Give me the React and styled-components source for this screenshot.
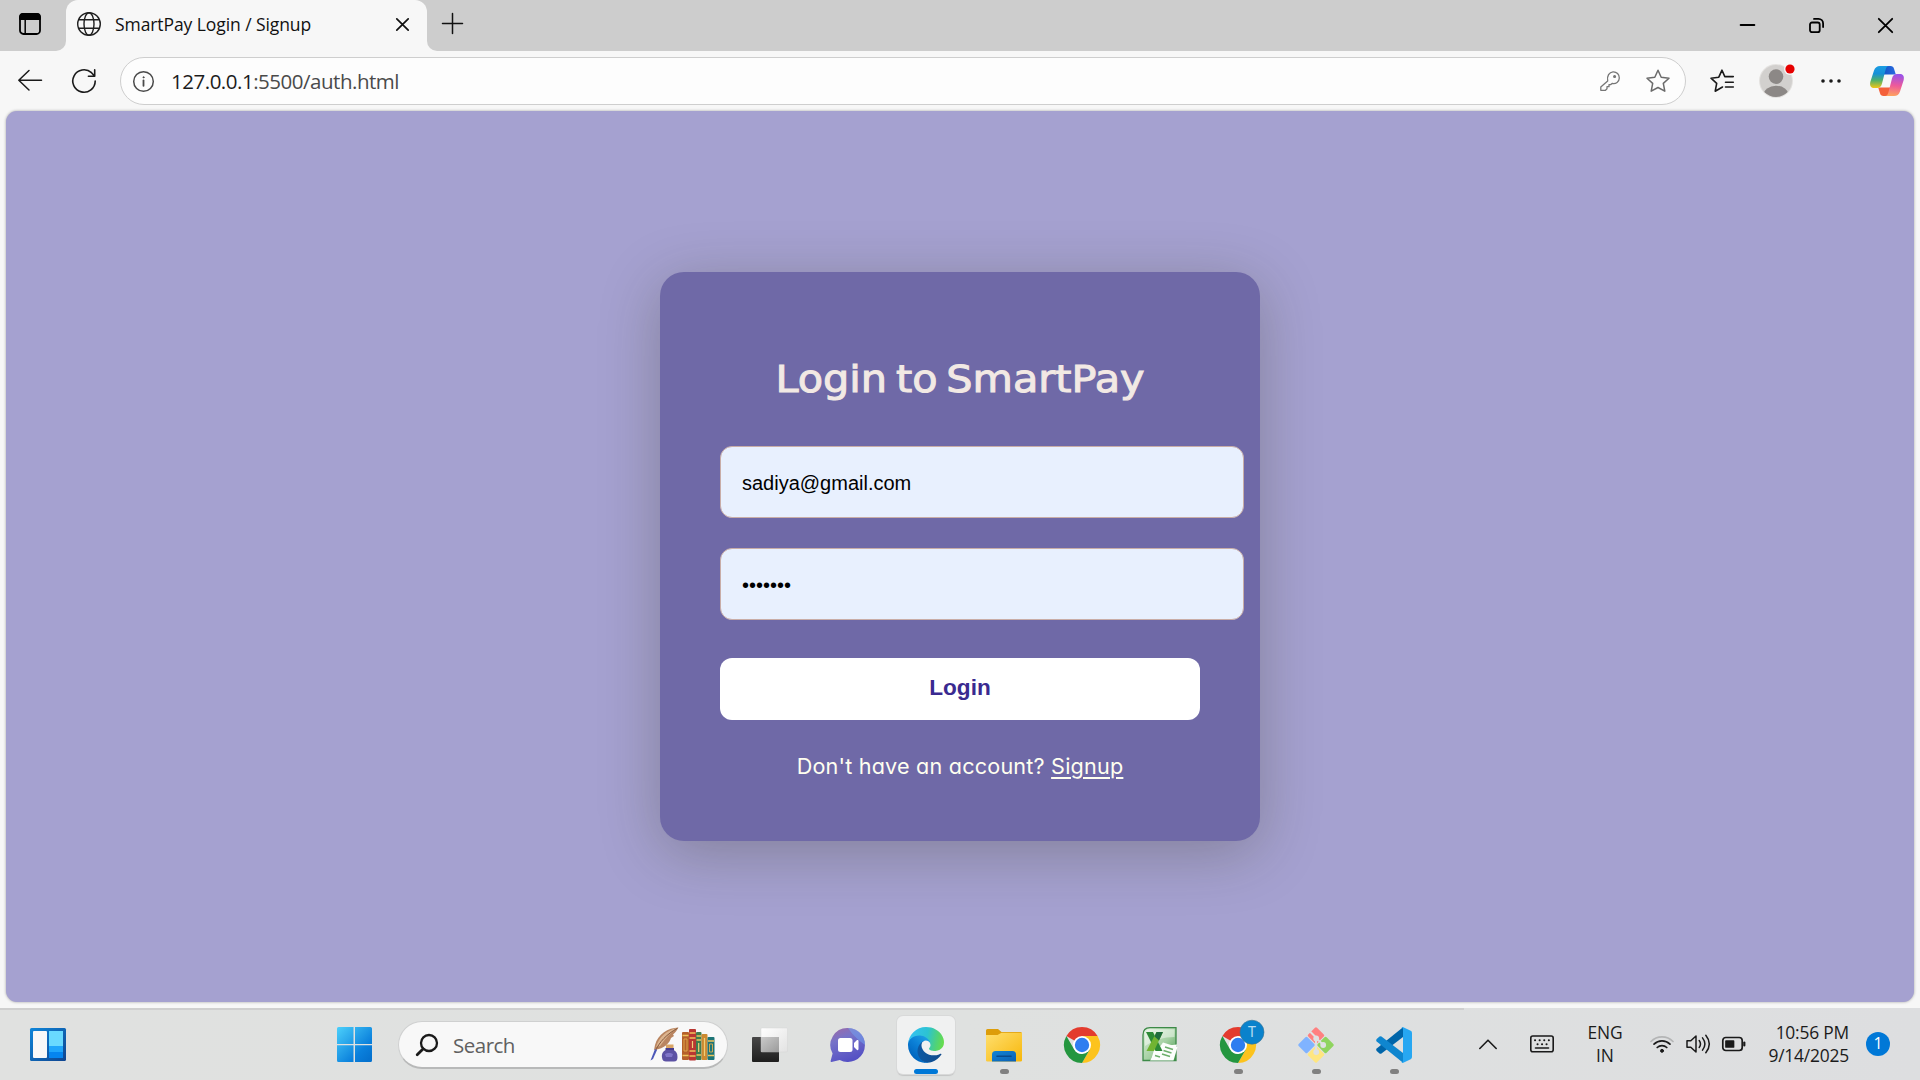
import React from "react";
import styled, { createGlobalStyle, css } from "styled-components";

const Global = createGlobalStyle`
  * { box-sizing: border-box; }
  html, body { margin: 0; padding: 0; overflow: hidden; }
  body { font-family: "Open Sans", "Noto Sans", sans-serif; background: #f7f7f7; }
  svg { display: block; flex: none; overflow: visible; }
`;

const Desktop = styled.div`
  width: 1920px;
  height: 1080px;
  display: flex;
  flex-direction: column;
  background: #f7f7f7;
`;

/* ---------- tab strip ---------- */
const TabStrip = styled.header`
  height: 51px;
  display: flex;
  flex: none;
`;
const StripStart = styled.div`
  width: 66px;
  padding: 13px 0 0 19px;
  background: #cdcdcd;
  border-bottom-right-radius: 10px;
`;
const TabHolder = styled.div`
  width: 361px;
  background: linear-gradient(#cdcdcd 50%, #f7f7f7 50%);
`;
const Tab = styled.div`
  height: 51px;
  display: flex;
  align-items: center;
  padding: 0 18px 4px 11px;
  border-radius: 12px 12px 0 0;
  background: #f7f7f7;
`;
const TabTitle = styled.span`
  flex: 1;
  margin-left: 14px;
  font-size: 17.5px;
  line-height: 24px;
  letter-spacing: -0.08px;
  color: #111;
  white-space: nowrap;
`;
const StripEnd = styled.div`
  flex: 1;
  display: flex;
  justify-content: space-between;
  padding: 13px 27px 0 15px;
  background: #cdcdcd;
  border-bottom-left-radius: 10px;
`;
const WindowButtons = styled.div`
  display: flex;
  gap: 54px;
  padding-top: 5px;
`;

/* ---------- toolbar ---------- */
const Toolbar = styled.div`
  height: 60px;
  flex: none;
  display: flex;
  align-items: center;
  padding: 0 16px 0 18px;
`;
const NavButtons = styled.div`
  display: flex;
  align-items: center;
  gap: 30px;
  width: 102px;
`;
const AddressBar = styled.div`
  width: 1566px;
  height: 48px;
  display: flex;
  align-items: center;
  padding: 0 15px 0 12px;
  border: 1px solid #cecece;
  border-radius: 24px;
  background: #fdfdfd;
`;
const Url = styled.span`
  flex: 1;
  margin-left: 17px;
  font-size: 20.5px;
  line-height: 28px;
  letter-spacing: -0.48px;
  color: #4a4a4a;
  white-space: nowrap;
  b { font-weight: 400; color: #1c1c1c; }
`;
const AddressIcons = styled.div`
  display: flex;
  align-items: center;
  gap: 26px;
`;
const ToolIcons = styled.div`
  flex: 1;
  display: flex;
  align-items: center;
  margin-left: 24px;
`;
const Gap = styled.i`
  width: ${(p) => p.$w}px;
  flex: none;
`;

/* ---------- page ---------- */
const Page = styled.main`
  width: 1908px;
  height: 891px;
  flex: none;
  margin: 0 6px;
  padding-top: 161px;
  display: flex;
  justify-content: center;
  align-items: flex-start;
  border-radius: 11px;
  background: #a5a1d0;
  box-shadow: 0 0 3px rgba(0, 0, 0, 0.35);
`;
const Card = styled.form`
  width: 600px;
  height: 569px;
  display: flex;
  flex-direction: column;
  padding: 82px 60px 0;
  border-radius: 24px;
  background: #6f69a7;
  box-shadow: 0 12px 60px rgba(40, 40, 10, 0.27);
`;
const Title = styled.h1`
  margin: 0 0 42px;
  height: 50px;
  display: flex;
  justify-content: center;
  font: 400 38px/50px "DejaVu Sans", sans-serif;
  -webkit-text-stroke: 1px #f2e9e4;
  word-spacing: -4px;
  transform: scaleX(1.09);
  color: #f2e9e4;
  white-space: nowrap;
`;
const Field = styled.input`
  width: 524px;
  height: 72px;
  flex: none;
  margin: 0 0 30px;
  padding: 2px 20px 0 21px;
  border: 1px solid #c9ada7;
  border-radius: 12px;
  outline: none;
  background: #e8f0fe;
  color: #000;
  font: 400 20px "Liberation Sans", sans-serif;
`;
const Submit = styled.button`
  width: 480px;
  height: 62px;
  flex: none;
  margin: 8px 0 0;
  padding: 0 0 2px;
  border: 0;
  border-radius: 12px;
  background: #fff;
  color: #3a2a90;
  font: 700 22.6px "Liberation Sans", sans-serif;
`;
const Switch = styled.p`
  margin: 30px 0 0;
  text-align: center;
  font: 400 21.6px/32px Inter, sans-serif;
  font-feature-settings: "cv11";
  letter-spacing: 0.2px;
  color: #fffff0;
  white-space: nowrap;
  u { text-decoration-thickness: 1.5px; text-underline-offset: 3px; text-decoration-skip-ink: auto; }
`;

/* ---------- taskbar ---------- */
const Spacer = styled.div`
  height: 6px;
  flex: none;
`;
const Taskbar = styled.footer`
  height: 72px;
  flex: none;
  display: flex;
  align-items: center;
  background: linear-gradient(90deg, #cfcfcf 0 1464px, transparent 1464px) 0 0 / 100% 2px no-repeat,
    linear-gradient(90deg, #e0e1e0, #dfe1e0 50%, #dddee0);
`;
const WidgetsArea = styled.div`
  width: 337px;
  flex: none;
  padding-left: 30px;
`;
const Search = styled.div`
  width: 330px;
  flex: none;
  height: 48px;
  margin: 2px 3px 0 26px;
  display: flex;
  align-items: center;
  padding: 0 12px 0 17px;
  border: 1px solid #cfd0d0;
  border-bottom: 2px solid #b8b9b9;
  border-radius: 24px;
  background: #f8f8f8;
`;
const SearchText = styled.span`
  flex: 1;
  margin-left: 15px;
  font-size: 20.5px;
  letter-spacing: -0.5px;
  line-height: 28px;
  color: #606060;
`;
const Slot = styled.div`
  width: 78px;
  flex: none;
  height: 72px;
  display: flex;
  flex-direction: column;
  align-items: center;
  padding-top: 8px;
`;
const Tile = styled.div`
  width: 58px;
  height: 58px;
  display: flex;
  flex-direction: column;
  align-items: center;
  justify-content: space-between;
  padding-top: 11px;
  border-radius: 6px;
  ${(p) =>
    p.$active &&
    css`
      background: #f0f1f1;
      box-shadow: 0 0 0 1px #d8d9d9, 0 2px 1px #c4c5c5;
    `}
`;
const Running = styled.i`
  width: ${(p) => (p.$active ? 24 : 9)}px;
  height: 5px;
  border-radius: 3px;
  background: ${(p) => (p.$active ? "#0078d7" : "#808080")};
  visibility: ${(p) => (p.$on ? "visible" : "hidden")};
`;
const Tray = styled.div`
  flex: 1;
  display: flex;
  align-items: center;
  padding: 0 30px 0 46px;
`;
const TrayText = styled.div`
  width: ${(p) => p.$w}px;
  flex: none;
  text-align: ${(p) => p.$align};
  font-size: 17.4px;
  line-height: 23px;
  letter-spacing: ${(p) => p.$ls || 0}px;
  color: #1b1b1b;
  white-space: nowrap;
`;
const Count = styled.span`
  width: 24px;
  flex: none;
  height: 24px;
  border-radius: 50%;
  background: #0078d7;
  color: #fff;
  font-size: 16px;
  line-height: 23px;
  text-align: center;
`;

/* ---------- icons ---------- */
const Line = ({ w = 24, h = 24, sw = 1.6, c = "#1a1a1a", children }) => (
  <svg width={w} height={h} viewBox={`0 0 ${w} ${h}`} fill="none" stroke={c} strokeWidth={sw} strokeLinecap="round" strokeLinejoin="round">
    {children}
  </svg>
);
const STAR = "M12 1.2 15.2 8.2 23 9.2 17.3 14.4 18.8 22.2 12 18.5 5.2 22.2 6.7 14.4 1 9.2 8.8 8.2Z";

const TabActions = () => (
  <Line w={22} h={22} sw={1.8} c="#000">
    <rect x="1" y="1" width="20" height="20" rx="3.5" />
    <path d="M1 6V4a3 3 0 0 1 3-3h14a3 3 0 0 1 3 3v2Z" fill="#000" />
    <path d="M6.2 6v15" strokeWidth="1.5" />
  </Line>
);
const Globe = () => (
  <Line sw={1.4} c="#1f1f1f">
    <circle cx="12" cy="12" r="11.3" />
    <ellipse cx="12" cy="12" rx="5" ry="11.3" />
    <path d="M1.8 7.7h20.4M1.8 16.3h20.4" />
  </Line>
);
const Info = () => (
  <Line w={21} h={21} sw={1.5} c="#4a4a4a">
    <circle cx="10.5" cy="10.5" r="9.8" />
    <path d="M10.5 9.5v5.3" strokeWidth="1.8" />
    <circle cx="10.5" cy="6.3" r="0.6" fill="#4a4a4a" strokeWidth="0.8" />
  </Line>
);
const Key = () => (
  <Line w={20} h={20} sw={1.3} c="#767676">
    <path d="M7.7 9.9C6.7 5.2 9.2 1 13 .8c3.700-.2 6.400 2.700 6.300 6.200-.1 3.900-3.400 6.200-7.200 5.400L10.800 13.600H9v2.100H7v2.100L5.500 19.300H.8v-3.200Z" />
    <circle cx="14.600" cy="5.500" r="0.900" fill="#767676" />
  </Line>
);
const Avatar = () => (
  <svg width="34" height="34" viewBox="0 0 34 34">
    <clipPath id="av"><circle cx="17" cy="17" r="16" /></clipPath>
    <circle cx="17" cy="17" r="17" fill="#e4e2e0" />
    <circle cx="17" cy="17" r="16" fill="#d2d0ce" />
    <circle cx="17" cy="12.600" r="7.300" fill="#8c8886" />
    <ellipse cx="17" cy="31" rx="12.500" ry="9.300" fill="#8c8886" clipPath="url(#av)" />
    <circle cx="31" cy="5" r="6" fill="#f7f7f7" />
    <circle cx="31" cy="5" r="4.600" fill="#e60000" />
  </svg>
);
const Copilot = () => (
  <svg width="34" height="30" viewBox="0 0 34 30">
    <defs>
      <linearGradient id="cpA" x1="0" y1="0" x2="0" y2="1">
        <stop offset="0" stopColor="#1b9de2" /><stop offset=".35" stopColor="#1690d8" /><stop offset=".65" stopColor="#4fb06a" /><stop offset="1" stopColor="#f3c614" />
      </linearGradient>
      <linearGradient id="cpB" x1=".3" y1="0" x2=".2" y2="1">
        <stop offset="0" stopColor="#9a52e8" /><stop offset=".5" stopColor="#ee5a9a" /><stop offset="1" stopColor="#ffa65c" />
      </linearGradient>
      <linearGradient id="cpC"><stop offset="0" stopColor="#1558c8" /><stop offset="1" stopColor="#2a6ae0" /></linearGradient>
    </defs>
    <path d="M14 0h6.500c2 0 3 1 3.500 2.700L25.800 8.500H20.500L18 8.500H14Z" fill="url(#cpC)" />
    <path d="M20 30h-6.500c-2 0-3-1-3.500-2.700L8.200 21.500H20Z" fill="#f4603a" />
    <path d="M10 0h9c-2 0-2.800 1.500-3.500 4L12 17.500c-.8 2.800-2 4.500-5 4.500H4C.8 22-.5 19.500.3 16L4 4.500C5 1.500 7 0 10 0Z" fill="url(#cpA)" />
    <path d="M24 30h-9c2 0 2.800-1.500 3.500-4L22 12.500C22.800 9.700 24 8 27 8h3c3.200 0 4.500 2.500 3.700 6L30 25.500C29 28.500 27 30 24 30Z" fill="url(#cpB)" />
  </svg>
);
const Widgets = () => (
  <svg width="36" height="33" viewBox="0 0 36 33">
    <defs><linearGradient id="wg" x2="1" y2="1"><stop stopColor="#0f86da" /><stop offset="1" stopColor="#0f4590" /></linearGradient></defs>
    <rect width="36" height="33" rx="1.500" fill="url(#wg)" />
    <rect x="3" y="3" width="14" height="27" rx="1" fill="#f8f8f8" />
    <path d="M19 3h14v15H19z" fill="#69daff" /><path d="M19 18h14v6H19z" fill="#1fa6fb" /><path d="M19 24h14v6H19z" fill="#0585ef" />
  </svg>
);
const Windows = () => (
  <svg width="35" height="35" viewBox="0 0 35 35">
    <defs><linearGradient id="wi" gradientUnits="userSpaceOnUse" x1="0" y1="0" x2="32" y2="32"><stop stopColor="#4cd0fb" /><stop offset=".75" stopColor="#0a80dc" /><stop offset="1" stopColor="#0572cf" /></linearGradient></defs>
    <path d="M1.500 0H16.500V17H0V1.500A1.500 1.500 0 0 1 1.500 0ZM18 0H33.500A1.500 1.500 0 0 1 35 1.500V17H18ZM0 18.200H16.500V35H1.500A1.500 1.500 0 0 1 0 33.500ZM18 18.200H35V33.500A1.500 1.500 0 0 1 33.500 35H18Z" fill="url(#wi)" />
  </svg>
);
const QuillAndBooks = () => (
  <svg width="65" height="35" viewBox="0 0 65 35">
    <path d="M28.500.5C18 .8 8 7 5 18l-1 5C15 22 20 15 21 11l3-2-1-1.500C26 5 27 3 28.500.5Z" fill="#b98560" />
    <path d="M27 1C17 3 9 10 6 20l4-1C15 12 20 6 27 1Z" fill="#dcb48e" />
    <path d="M27.500 1.200C17 7 9 15 5 25" stroke="#85583c" fill="none" />
    <path d="m5 22 2 1-4 9-2.500 1.500Z" fill="#4b57b8" />
    <path d="M16 17.500h7.500v4H16z" fill="#d9a565" /><path d="M15.500 21h8.500v4h-8.500z" fill="#453c8d" />
    <path d="M16 23c-3 1-4.500 4-4 7.500.3 3 2 4 4 4h8c2.500 0 3.500-1.500 3.500-4.500 0-4-1.500-6-4-7Z" fill="#5c52a4" />
    <path d="M15 27c2-1.500 6-1.500 8 0l-1 3h-6Z" fill="#7f75c8" />
    <rect x="32" y="5" width="7" height="28" rx="1" fill="#b5602a" />
    <rect x="39" y="2" width="7" height="31.500" rx="1" fill="#b93632" />
    <rect x="46" y="5" width="5.500" height="28" rx="1" fill="#3e7c4f" />
    <rect x="51.500" y="7" width="6" height="26" rx="1" fill="#cc8a30" />
    <rect x="57.500" y="10" width="7" height="23" rx="1" fill="#1d7475" />
    <path d="M32.500 8.500h6M32.500 28.500h6M39.500 6h6M39.500 11h6M39.500 24h6M39.500 29h6M46.500 9h4.500M46.500 13h4.500M46.500 28h4.500M58 14h6M58 28.500h6" stroke="#efc45c" strokeWidth="1.300" />
    <path d="M34 12h3v12h-3zM59.500 17h3v8h-3z" fill="none" stroke="#e2ad4c" strokeWidth=".9" />
    <path d="M42.500 14v7M48.700 16v9M54.500 11v18" stroke="#f0cf78" strokeWidth="1.200" />
  </svg>
);
const TaskView = () => (
  <svg width="36" height="36" viewBox="0 0 36 36">
    <defs>
      <linearGradient id="tvA" x2="0" y2="1"><stop stopColor="#474747" /><stop offset="1" stopColor="#1e1e1e" /></linearGradient>
      <linearGradient id="tvB" x2="1" y2="1"><stop stopColor="#fff" /><stop offset="1" stopColor="#e2e2e2" /></linearGradient>
      <linearGradient id="tvC" x2="1" y2="1"><stop stopColor="#cacaca" /><stop offset="1" stopColor="#9b9b9b" /></linearGradient>
    </defs>
    <rect x="0" y="10" width="27" height="25" rx="1" fill="url(#tvA)" />
    <rect x="9" y="1" width="26.500" height="24" rx="1" fill="url(#tvB)" stroke="#d2d2d2" strokeWidth=".4" />
    <path d="M9 10h18v15H10a1 1 0 0 1-1-1Z" fill="url(#tvC)" />
  </svg>
);
const Chat = () => (
  <svg width="36" height="36" viewBox="0 0 36 36">
    <defs><linearGradient id="ch" x1="0.100" y1="0" x2=".5" y2="1"><stop stopColor="#9c6aa8" /><stop offset=".35" stopColor="#7773c8" /><stop offset="1" stopColor="#5450c4" /></linearGradient></defs>
    <path d="M18 1a17 17 0 1 1-8.200 31.900L1.500 35c-.6.100-1-.3-.9-.9l2-7.700A17 17 0 0 1 18 1Z" fill="url(#ch)" />
    <path d="M18 1a17 17 0 0 1 17 17c-4-3-11-8-17-17Z" fill="#72a0ee" opacity=".55" />
    <rect x="8" y="11" width="14.500" height="14" rx="2.500" fill="#fff" />
    <path d="M24 16l3-3q1.500-.5 1.500 1v8q0 1.500-1.500 1l-3-3Z" fill="#fff" />
  </svg>
);
const Edge = () => (
  <svg width="36" height="36" viewBox="0 0 256 256">
    <defs>
      <linearGradient id="eA" x1="60" y1="178" x2="242" y2="178" gradientUnits="userSpaceOnUse"><stop stopColor="#0c59a4" /><stop offset="1" stopColor="#114a8b" /></linearGradient>
      <linearGradient id="eB" x1="150" y1="95" x2="45" y2="215" gradientUnits="userSpaceOnUse"><stop stopColor="#1b9de2" /><stop offset=".5" stopColor="#0b7fd6" /><stop offset="1" stopColor="#0067c0" /></linearGradient>
      <linearGradient id="eC" x1="10" y1="60" x2="250" y2="110" gradientUnits="userSpaceOnUse"><stop stopColor="#35c1f1" /><stop offset=".5" stopColor="#2cc3d2" /><stop offset=".8" stopColor="#4fd27a" /><stop offset="1" stopColor="#66dc4e" /></linearGradient>
    </defs>
    <path d="M231 190.500a94 94 0 0 1-10.500 4.700 102 102 0 0 1-36 6.500c-47.500 0-88.800-32.600-88.800-74.500A31.600 31.600 0 0 1 112.200 99.700c-43 1.800-54 46.500-54 72.700 0 74 68.300 81.600 83 81.600 8 0 20-2.300 27.100-4.600l1.300-.4A128.300 128.300 0 0 0 236.200 197.700a4 4 0 0 0-5.200-7.200Z" fill="url(#eA)" />
    <path d="M105.700 241.400a79.200 79.200 0 0 1-22.700-21.300 80.700 80.700 0 0 1 29.200-120.400c3.200-1.500 8.500-4.100 15.600-4a32.400 32.400 0 0 1 25.700 13 31.900 31.900 0 0 1 6.300 18.700c0-.2 24.500-79.600-80-79.600-43.900 0-80 41.700-80 78.200a130.200 130.200 0 0 0 12.100 56 128 128 0 0 0 156.400 67 75.500 75.500 0 0 1-62.600-7.600Z" fill="url(#eB)" />
    <path d="M152.300 148.900c-.8 1-3.300 2.500-3.300 5.700 0 2.600 1.700 5.100 4.700 7.200 14.400 10 41.500 8.700 41.600 8.700a59.600 59.600 0 0 0 30.300-8.300 61.400 61.400 0 0 0 30.400-52.900c.3-22.400-8-37.300-11.300-43.900C223.500 23.900 177.700 0 128 0A128 128 0 0 0 0 126.200c.5-36.500 36.800-66 80-66 3.500 0 23.500.3 42 10.100 16.300 8.500 24.900 18.900 30.800 29.200 6.200 10.700 7.300 24.100 7.300 29.500s-2.700 13.300-7.800 19.900Z" fill="url(#eC)" />
  </svg>
);
const Folder = () => (
  <svg width="36" height="36" viewBox="0 0 36 36">
    <defs>
      <linearGradient id="fo" x2="1" y2="1"><stop stopColor="#ffdf6f" /><stop offset="1" stopColor="#f7b70b" /></linearGradient>
      <linearGradient id="fb" x2="1" y2="1"><stop stopColor="#1184d4" /><stop offset="1" stopColor="#0b60b4" /></linearGradient>
    </defs>
    <path d="M0 3.500Q0 2 1.500 2H12l3.500 3H34.500Q36 5 36 6.500V18H0Z" fill="#dd9d0a" />
    <path d="M0 8h11.500l4-2.300H36V33.500Q36 34.500 34.500 34.500h-33Q0 34.500 0 33.500Z" fill="url(#fo)" />
    <path d="M6 34.500v-7Q6 24 9.500 24h17q3.500 0 3.500 3.500v7Z" fill="url(#fb)" />
    <path d="M11 29.300h14" stroke="#084a8c" strokeWidth="1.600" strokeLinecap="round" />
  </svg>
);
const Chrome = ({ badge }) => (
  <svg width="36" height="36" viewBox="0 0 36 36">
    <path d="M18 18 2.410 9A18 18 0 0 1 33.590 9Z" fill="#e33b2e" />
    <path d="M18 9H33.590A18 18 0 0 1 18 36l7.800-13.500Z" fill="#fcc31e" />
    <path d="M2.410 9 10.200 22.500A9 9 0 0 0 18 27l7.800-4.500L18 36A18 18 0 0 1 2.410 9Z" fill="#24963f" />
    <circle cx="18" cy="18" r="9" fill="#fff" />
    <circle cx="18" cy="18" r="7.200" fill="#2f7df0" />
    {badge && (
      <g>
        <circle cx="32" cy="5.200" r="12" fill="#0a82cc" stroke="#3f7390" strokeWidth=".6" />
        <text x="32" y="10.200" textAnchor="middle" fontFamily="Roboto, sans-serif" fontSize="14" fill="#b6dcf2">T</text>
      </g>
    )}
  </svg>
);
const Excel = () => (
  <svg width="36" height="36" viewBox="0 0 36 36">
    <defs><linearGradient id="ex" x2="1" y2="1"><stop stopColor="#e2f2df" /><stop offset=".55" stopColor="#a4d0a2" /><stop offset="1" stopColor="#3f9548" /></linearGradient></defs>
    <path d="M8 .7H34V33.500H1V8Q1 .7 8 .7Z" fill="url(#ex)" stroke="#3d8a48" strokeWidth="1.300" />
    <path d="M8 2.200H32.500V10C22 10 12 13 3 19V8Q3 2.200 8 2.200Z" fill="#fff" opacity=".45" />
    <path d="M13 20 35 17.500 31 33 9 33Z" fill="#fff" />
    <path d="M21 15.500 35.500 20 31.500 33.500H8Z" fill="#fcfefc" />
    <path d="m23 20 8 2.500M21.500 23.500l8 2.500M20 27l8 2.500M13 28.500l5 1.500" stroke="#6daf6c" strokeWidth="1.600" />
    <path d="M4 5h7l9.500 19h-7Z" fill="#2c8a35" />
    <path d="M14.500 5H21L12 24H4.500Z" fill="#71b432" />
    <path d="M14.500 5H21l-4 8.500-4.500-4Z" fill="#1f6c3c" />
  </svg>
);
const Git = () => (
  <svg width="36" height="36" viewBox="0 0 36 36">
    <g transform="rotate(45 18 18)">
      <rect x="5" y="5" width="12.500" height="12.500" rx="1.500" fill="#ff8080" />
      <rect x="18.500" y="5" width="12.500" height="12.500" rx="1.500" fill="#8fd45f" />
      <rect x="5" y="18.500" width="12.500" height="12.500" rx="1.500" fill="#80b3ff" />
      <rect x="18.500" y="18.500" width="12.500" height="12.500" rx="1.500" fill="#ffe680" />
    </g>
    <path d="m12 4.500 6 6v14M18 11l7.500 7" stroke="#dfe1e1" strokeWidth="2" fill="none" />
    <circle cx="18.200" cy="11.500" r="2.900" fill="#dfe1e1" /><circle cx="25.200" cy="18" r="2.900" fill="#dfe1e1" /><circle cx="18.200" cy="25" r="2.900" fill="#dfe1e1" />
  </svg>
);
const VsCode = () => (
  <svg width="36" height="36" viewBox="0 0 36 36">
    <path d="M27 .3v9.600L5.500 26.500q-1 .7-2 0L.7 24q-1.200-1.200 0-2.400Z" fill="#0065a9" />
    <path d="M27 35.700v-9.600L5.500 9.500q-1-.7-2 0L.7 12q-1.200 1.200 0 2.400Z" fill="#0f86cf" />
    <path d="M25.500.2q.9-.4 1.800 0l7.400 3.600Q36 4.400 36 5.900v24.200q0 1.500-1.300 2.100l-7.400 3.600q-.9.400-1.800 0 1.500-.3 1.500-2.300V2.500q0-2-1.500-2.300Z" fill="#27a7f2" />
  </svg>
);

const APPS = [
  { id: "taskview", Icon: TaskView },
  { id: "chat", Icon: Chat },
  { id: "edge", Icon: Edge, on: true, active: true },
  { id: "files", Icon: Folder, on: true },
  { id: "chrome", Icon: Chrome },
  { id: "excel", Icon: Excel },
  { id: "chrome-t", Icon: Chrome, on: true, badge: true },
  { id: "git", Icon: Git, on: true },
  { id: "code", Icon: VsCode, on: true },
];

export default function App() {
  return (
    <Desktop>
      <Global />
      <TabStrip>
        <StripStart><TabActions /></StripStart>
        <TabHolder>
          <Tab>
            <Globe />
            <TabTitle>SmartPay Login / Signup</TabTitle>
            <Line w={13} h={13} sw={1.7} c="#111"><path d="M.8 1.800 12.200 13.200M12.200 1.800.8 13.200" /></Line>
          </Tab>
        </TabHolder>
        <StripEnd>
          <Line w={21} h={21} sw={1.5} c="#111"><path d="M10.500.5v20M.5 10.500h20" /></Line>
          <WindowButtons>
            <Line w={15} h={15} sw={1.800} c="#000"><path d="M.6 7h13.800" /></Line>
            <Line w={15} h={15} sw={1.800} c="#000"><rect x="1" y="4.500" width="9.700" height="9.700" rx="2" /><path d="M5 .9h4.500A4.600 4.600 0 0 1 14.100 5.500V9" /></Line>
            <Line w={15} h={15} sw={1.800} c="#000"><path d="m.8.8 13.400 13.400M14.200.8.8 14.200" /></Line>
          </WindowButtons>
        </StripEnd>
      </TabStrip>

      <Toolbar>
        <NavButtons>
          <Line sw={1.500}><path d="M23.500 11.300H.8M11 1.500.8 11.300 11 21" /></Line>
          <Line sw={1.600}><path d="M23.200 12A11.200 11.200 0 1 1 19.500 3.700L22.500 7M22.700.9V7.300h-6.300" /></Line>
        </NavButtons>
        <AddressBar>
          <Info />
          <Url><b>127.0.0.1</b>:5500/auth.html</Url>
          <AddressIcons>
            <Key />
            <Line sw={1.500} c="#6b6b6b"><path d={STAR} /></Line>
          </AddressIcons>
        </AddressBar>
        <ToolIcons>
          <Line w={24} h={24} sw={1.600}><path d="M12.500 18 5.200 22.200 6.700 14.400 1 9.200 8.800 8.200 12 1.200 14.800 7.600H23.300M15.500 13.200h7.800M15.500 18h7.800" /></Line>
          <Gap $w={25} />
          <Avatar />
          <Gap $w={28} />
          <svg width="20" height="4" viewBox="0 0 20 4" fill="#1a1a1a"><circle cx="2" cy="2" r="1.800" /><circle cx="10" cy="2" r="1.800" /><circle cx="18" cy="2" r="1.800" /></svg>
          <Gap $w={29} />
          <Copilot />
        </ToolIcons>
      </Toolbar>

      <Page>
        <Card onSubmit={(e) => e.preventDefault()}>
          <Title>Login to SmartPay</Title>
          <Field type="text" defaultValue="sadiya@gmail.com" />
          <Field type="password" defaultValue="1234567" />
          <Submit>Login</Submit>
          <Switch>Don't have an account? <u>Signup</u></Switch>
        </Card>
      </Page>
      <Spacer />

      <Taskbar>
        <WidgetsArea><Widgets /></WidgetsArea>
        <Windows />
        <Search>
          <Line w={22} h={22} sw={2.300}><circle cx="13" cy="9" r="8" /><path d="M7 15 1.200 20.800" strokeWidth="2.800" /></Line>
          <SearchText>Search</SearchText>
          <QuillAndBooks />
        </Search>
        {APPS.map(({ id, Icon, on, active, badge }) => (
          <Slot key={id}>
            <Tile $active={active}>
              <Icon badge={badge} />
              <Running $on={on} $active={active} />
            </Tile>
          </Slot>
        ))}
        <Tray>
          <Line w={18} h={11} sw={1.600}><path d="M.8 9.500 9 1.200l8.200 8.300" /></Line>
          <Gap $w={33} />
          <Line w={24} h={18} sw={1.600}>
            <rect x=".8" y="1" width="22.400" height="15.700" rx="2" />
            <path d="M5.500 13h13" />
            <path d="M5 5.200h.1M9.600 5.200h.1M14.200 5.200h.1M18.800 5.200h.1M7.500 9.300h.1M12 9.300h.1M16.500 9.300h.1" strokeWidth="2" />
          </Line>
          <Gap $w={29} />
          <TrayText $w={44} $align="center" $ls={-0.100}>ENG<br />IN</TrayText>
          <Gap $w={23} />
          <Line w={24} h={18} sw={1.700}>
            <path d="M1 6.500a15.500 15.500 0 0 1 22 0" stroke="#b4b5b6" />
            <path d="M4 9.200a11.400 11.400 0 0 1 16 0M7.200 12.500a6.900 6.900 0 0 1 9.600 0" />
            <circle cx="12" cy="15.800" r="1.500" fill="#1a1a1a" strokeWidth="1" />
          </Line>
          <Gap $w={12} />
          <Line w={24} h={20} sw={1.500}>
            <path d="M1 6.800h3.800L10 2v16L4.800 13.200H1Z" />
            <path d="M13.200 6.500q2.600 3.500 0 7M16.500 3.900q4.800 6.100 0 12.200M19.800 1.300q7 8.700 0 17.400" />
          </Line>
          <Gap $w={12} />
          <Line w={24} h={16} sw={1.700}>
            <rect x=".8" y="1.500" width="19.400" height="13" rx="3" />
            <path d="M4 5h7.500v6H4z" fill="#1a1a1a" /><path d="M22.300 6.500v3" strokeWidth="2.200" />
          </Line>
          <Gap $w={8} />
          <TrayText $w={95} $align="right" $ls={-0.200}>10:56 PM<br />9/14/2025</TrayText>
          <Gap $w={17} />
          <Count>1</Count>
        </Tray>
      </Taskbar>
    </Desktop>
  );
}
